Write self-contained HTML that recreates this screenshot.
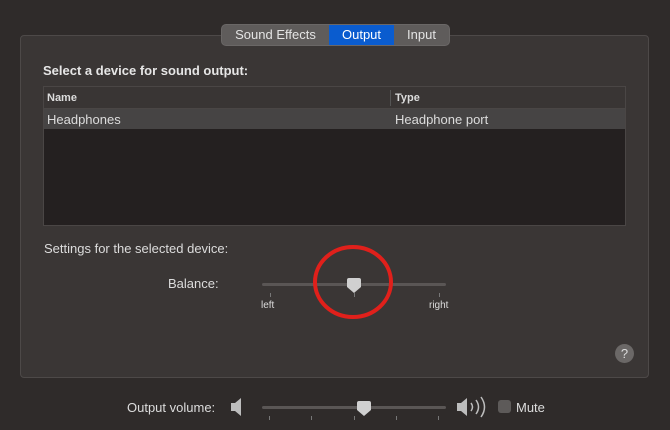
<!DOCTYPE html>
<html><head><style>
body{margin:0;width:670px;height:430px;background:#2f2b2a;font-family:"Liberation Sans",sans-serif;color:#dcdcdc;position:relative;overflow:hidden;font-size:13px}
.a{position:absolute}
</style></head><body>
<div class="a" style="left:20px;top:35px;width:627px;height:341px;background:#3a3635;border:1px solid #4d4948;border-radius:4px"></div>
<div class="a" style="left:221px;top:24px;width:227px;height:20px;border-radius:5px;background:#5f5c5b;border:1px solid #6a6766;overflow:hidden;font-size:13px;line-height:20px">
 <span class="a" style="left:0;width:107px;text-align:center;color:#e4e4e4">Sound Effects</span>
 <span class="a" style="left:107px;width:65px;height:20px;background:#0a5ccf;text-align:center;color:#fff">Output</span>
 <span class="a" style="left:172px;width:55px;text-align:center;color:#e4e4e4">Input</span>
</div>
<div class="a" style="left:43px;top:63px;font-weight:bold;font-size:13px;color:#e6e6e6">Select a device for sound output:</div>
<div class="a" style="left:43px;top:86px;width:581px;height:138px;background:#242020;border:1px solid #4a4645">
 <div class="a" style="left:0;top:0;width:581px;height:21px;background:#393534;border-bottom:1px solid #4a4645"></div>
 <div class="a" style="left:346px;top:3px;width:1px;height:16px;background:#555"></div>
 <div class="a" style="left:3px;top:5px;font-size:11px;font-weight:bold">Name</div>
 <div class="a" style="left:351px;top:5px;font-size:11px;font-weight:bold">Type</div>
 <div class="a" style="left:0;top:22px;width:581px;height:20px;background:#464444"></div>
 <div class="a" style="left:3px;top:25px">Headphones</div>
 <div class="a" style="left:351px;top:25px">Headphone port</div>
</div>
<div class="a" style="left:44px;top:241px">Settings for the selected device:</div>
<div class="a" style="left:168px;top:276px">Balance:</div>
<div class="a" style="left:262px;top:283px;width:184px;height:3px;border-radius:2px;background:#5a5655"></div>
<div class="a" style="left:270px;top:293px;width:1px;height:4px;background:#777"></div>
<div class="a" style="left:354px;top:293px;width:1px;height:4px;background:#777"></div>
<div class="a" style="left:439px;top:293px;width:1px;height:4px;background:#777"></div>
<div class="a" style="left:261px;top:300px;font-size:10px">left</div>
<div class="a" style="left:429px;top:300px;font-size:10px">right</div>
<svg class="a" style="left:346px;top:277px" width="16" height="18"><path d="M1 3Q1 1 3 1H13Q15 1 15 3V10L8 16L1 10Z" fill="#d0d0d0"/></svg>
<svg class="a" style="left:312px;top:244px" width="82" height="76"><ellipse cx="41" cy="38" rx="38" ry="35" fill="none" stroke="#e0201b" stroke-width="4"/></svg>
<div class="a" style="left:615px;top:344px;width:19px;height:19px;border-radius:50%;background:#6b6867;color:#ddd;text-align:center;line-height:19px;font-size:13px">?</div>
<div class="a" style="left:127px;top:400px">Output volume:</div>
<svg class="a" style="left:229px;top:398px" width="16" height="18"><path d="M2 5H6L12 0V18L6 13H2Z" fill="#bdbdbd"/></svg>
<div class="a" style="left:262px;top:406px;width:184px;height:3px;border-radius:2px;background:#5a5655"></div>
<div class="a" style="left:269px;top:416px;width:1px;height:4px;background:#777"></div>
<div class="a" style="left:311px;top:416px;width:1px;height:4px;background:#777"></div>
<div class="a" style="left:354px;top:416px;width:1px;height:4px;background:#777"></div>
<div class="a" style="left:396px;top:416px;width:1px;height:4px;background:#777"></div>
<div class="a" style="left:438px;top:416px;width:1px;height:4px;background:#777"></div>
<svg class="a" style="left:356px;top:400px" width="16" height="18"><path d="M1 3Q1 1 3 1H13Q15 1 15 3V10L8 16L1 10Z" fill="#d0d0d0"/></svg>
<svg class="a" style="left:456px;top:396px" width="34" height="24"><path d="M1 7H5L11 2V20L5 15H1Z" fill="#bdbdbd"/><g fill="none" stroke="#bdbdbd" stroke-width="1.5"><path d="M15 7Q18 11 15 15"/><path d="M20 4Q25 11 20 18"/><path d="M25 1Q32 11 25 21"/></g></svg>
<div class="a" style="left:498px;top:400px;width:13px;height:13px;border-radius:3px;background:#5d5a59"></div>
<div class="a" style="left:516px;top:400px">Mute</div>
</body></html>
